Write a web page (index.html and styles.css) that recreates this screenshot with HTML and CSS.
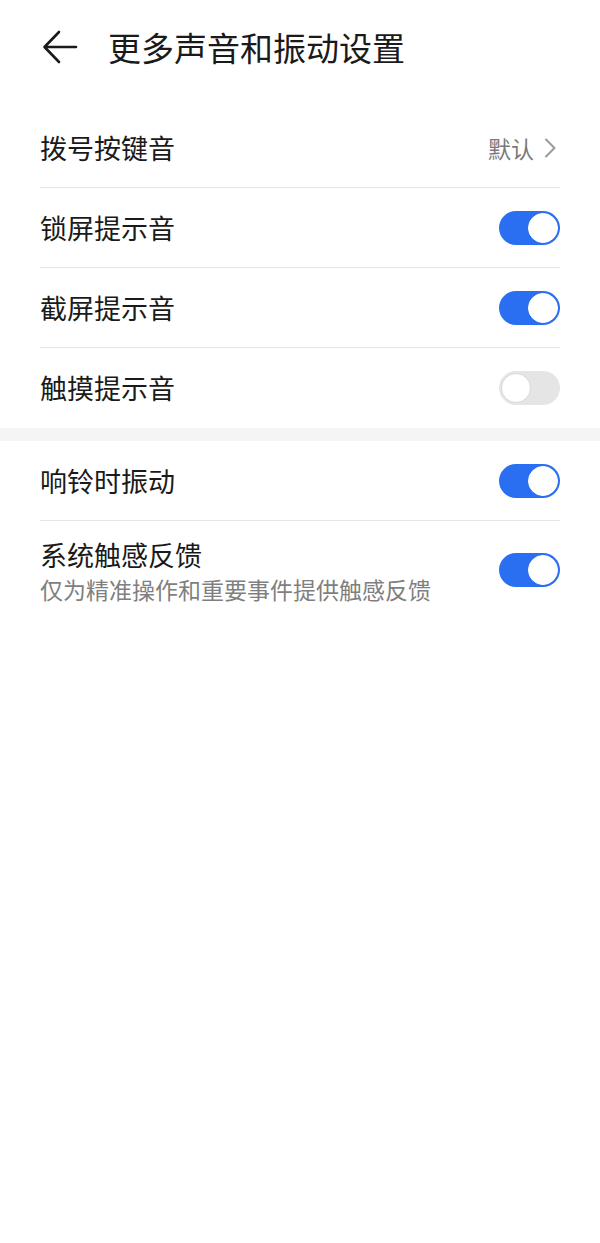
FILE: index.html
```html
<!DOCTYPE html>
<html lang="zh-CN">
<head>
    <meta charset="UTF-8">
    <meta name="viewport" content="width=device-width, initial-scale=1.0">
    <title>更多声音和振动设置</title>
    <link rel="stylesheet" href="styles.css">
</head>
<body>
    <div class="header">
        <svg class="back" width="36" height="34" viewBox="0 0 36 34">
            <path d="M34 17H3M17 2L2.5 17L17 32" fill="none" stroke="#1a1a1a" stroke-width="2.6" stroke-linecap="round" stroke-linejoin="round"/>
        </svg>
        <h1>更多声音和振动设置</h1>
    </div>

    <div class="group first">
        <div class="row">
            <span class="label">拨号按键音</span>
            <span class="value">默认
                <svg class="chevron" width="12" height="20" viewBox="0 0 12 20">
                    <path d="M2 1.5L10.5 10L2 18.5" fill="none" stroke="#9a9a9a" stroke-width="2" stroke-linecap="round" stroke-linejoin="round"/>
                </svg>
            </span>
        </div>
        <div class="row">
            <span class="label">锁屏提示音</span>
            <span class="switch on"></span>
        </div>
        <div class="row">
            <span class="label">截屏提示音</span>
            <span class="switch on"></span>
        </div>
        <div class="row">
            <span class="label">触摸提示音</span>
            <span class="switch"></span>
        </div>
    </div>

    <div class="gap"></div>

    <div class="group">
        <div class="row">
            <span class="label">响铃时振动</span>
            <span class="switch on"></span>
        </div>
        <div class="row tall">
            <div class="text">
                <span class="label">系统触感反馈</span>
                <span class="hint">仅为精准操作和重要事件提供触感反馈</span>
            </div>
            <span class="switch on"></span>
        </div>
    </div>
</body>
</html>
```

FILE: styles.css
```css
body {
    margin: 0;
    background: #fff;
    font-family: "Noto Sans CJK SC", "Noto Sans", sans-serif;
    color: #1a1a1a;
}
.header {
    height: 94px;
    display: flex;
    align-items: center;
    padding-left: 42px;
}
.back { margin-right: 30px; }
.header h1 {
    margin: 0;
    font-size: 33px;
    font-weight: 400;
    line-height: 40px;
}
.group { padding: 0 40px; }
.group.first { margin-top: 14px; }
.row {
    height: 80px;
    box-sizing: border-box;
    display: flex;
    align-items: center;
    justify-content: space-between;
    border-bottom: 1px solid #e6e6e6;
}
.row:last-child { border-bottom: none; }
.row.tall { height: 98px; }
.label {
    font-size: 27px;
    line-height: 36px;
}
.value {
    display: flex;
    align-items: center;
    font-size: 23px;
    color: #7a7a7a;
}
.chevron { margin-left: 10px; margin-right: 4px; }
.text {
    display: flex;
    flex-direction: column;
    padding-top: 2px;
}
.hint {
    font-size: 23px;
    line-height: 32px;
    color: #7f7f7f;
}
.gap {
    height: 13px;
    background: #f5f5f5;
}
.switch {
    position: relative;
    width: 61px;
    height: 34px;
    border-radius: 17px;
    background: #e5e5e5;
    flex-shrink: 0;
}
.switch::after {
    content: "";
    position: absolute;
    top: 2px;
    left: 2px;
    width: 28px;
    height: 28px;
    border-radius: 50%;
    background: #fff;
    border: 1px solid #d8d8d8;
}
.switch.on { background: #2a6ef2; }
.switch.on::after {
    left: 29px;
    border-color: #fff;
}
```
